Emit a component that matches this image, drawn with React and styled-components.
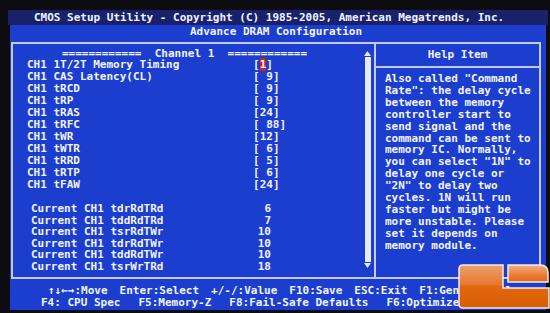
import React from 'react';
import styled, { createGlobalStyle } from 'styled-components';

const timings = [
  { label: 'CH1 1T/2T Memory Timing', value: '1', active: true },
  { label: 'CH1 CAS Latency(CL)', value: ' 9' },
  { label: 'CH1 tRCD', value: ' 9' },
  { label: 'CH1 tRP', value: ' 9' },
  { label: 'CH1 tRAS', value: '24' },
  { label: 'CH1 tRFC', value: ' 88' },
  { label: 'CH1 tWR', value: '12' },
  { label: 'CH1 tWTR', value: ' 6' },
  { label: 'CH1 tRRD', value: ' 5' },
  { label: 'CH1 tRTP', value: ' 6' },
  { label: 'CH1 tFAW', value: '24' },
];

const current = [
  ['Current CH1 tdrRdTRd', '6'],
  ['Current CH1 tddRdTRd', '7'],
  ['Current CH1 tsrRdTWr', '10'],
  ['Current CH1 tdrRdTWr', '10'],
  ['Current CH1 tddRdTWr', '10'],
  ['Current CH1 tsrWrTRd', '18'],
];

const helpLines = [
  'Also called "Command',
  'Rate": the delay cycle',
  'between the memory',
  'controller start to',
  'send signal and the',
  'command can be sent to',
  'memory IC. Normally,',
  'you can select "1N" to',
  'delay one cycle or',
  '"2N" to delay two',
  'cycles. 1N will run',
  'faster but might be',
  'more unstable. Please',
  'set it depends on',
  'memory module.',
];

const GlobalStyle = createGlobalStyle`
  html, body {
    margin: 0;
    padding: 0;
    background: #0d0d11;
  }
  body {
    width: 550px;
    height: 313px;
    overflow: hidden;
    font-family: "DejaVu Sans Mono", "Liberation Mono", monospace;
  }
`;

const Screen = styled.div`
  position: relative;
  width: 550px;
  height: 313px;
  box-sizing: border-box;
  padding: 10px 2px 0 8px;
  font-size: 11px;
  font-weight: bold;
  color: #f1f3ff;
`;

const TitleBar = styled.div`
  height: 15px;
  line-height: 15px;
  background: #19216b;
  padding-left: 26px;
  white-space: pre;
`;

const BlueArea = styled.div`
  margin: 0 2px;
  padding: 0 5px 1px 1px;
  background: #1c3ecf;
`;

const Subtitle = styled.div`
  height: 14px;
  line-height: 14px;
  text-align: center;
`;

const Frame = styled.div`
  margin-top: 3px;
  height: 237px;
  box-sizing: border-box;
  border: 2px solid #c3caf0;
  display: grid;
  grid-template-columns: 363px 163px;
`;

const LeftPanel = styled.div`
  display: flex;
  border-right: 2px solid #c3caf0;
`;

const Content = styled.div`
  flex: 1;
  padding: 4px 0 0 14px;
`;

const ChannelHeader = styled.div`
  line-height: 11px;
  padding-left: 35px;
  white-space: pre;
`;

const Row = styled.div`
  display: grid;
  grid-template-columns: 226px auto;
  line-height: 12px;
  white-space: pre;
`;

const Selected = styled.span`
  background: #d62020;
  color: #ffffff;
`;

const CurrentList = styled.div`
  margin-top: 12px;
`;

const CurrentRow = styled.div`
  display: grid;
  grid-template-columns: 200px 40px;
  padding-left: 4px;
  line-height: 11.6px;
  white-space: pre;

  span:last-child {
    text-align: right;
  }
`;

const ScrollTrack = styled.div`
  width: 7px;
  margin-right: 3px;
  padding: 7px 0 9px;
  display: flex;
  flex-direction: column;
  align-items: center;
`;

const ScrollBar = styled.div`
  flex: 1;
  width: 6px;
  margin: 1px 0;
  background: #e6eaff;
`;

const HelpPanel = styled.div`
  display: flex;
  flex-direction: column;
`;

const HelpHeader = styled.div`
  height: 22px;
  line-height: 22px;
  text-align: center;
  border-bottom: 2px solid #c3caf0;
`;

const HelpText = styled.div`
  padding: 5px 0 0 9px;
  line-height: 11.9px;

  div {
    white-space: pre;
  }
`;

const Footer = styled.div`
  padding-top: 6px;
  overflow: hidden;
`;

const FooterLine = styled.div`
  display: flex;
  gap: ${(p) => p.$gap}px;
  padding-left: ${(p) => p.$indent}px;
  line-height: 12px;
  white-space: pre;
`;

const Logo = styled.svg`
  position: absolute;
  left: 458px;
  top: 262px;
`;

const Arrow = ({ down }) => (
  <svg width="7" height="5" viewBox="0 0 7 5">
    <polygon points={down ? '0,0 7,0 3.5,5' : '3.5,0 7,5 0,5'} fill="#e6eaff" />
  </svg>
);

export default function App() {
  return (
    <>
      <GlobalStyle />
      <Screen>
        <TitleBar>CMOS Setup Utility - Copyright (C) 1985-2005, American Megatrends, Inc.</TitleBar>
        <BlueArea>
          <Subtitle>Advance DRAM Configuration</Subtitle>
          <Frame>
            <LeftPanel>
              <Content>
                <ChannelHeader>============  Channel 1  ============</ChannelHeader>
                {timings.map((t) => (
                  <Row key={t.label}>
                    <span>{t.label}</span>
                    <span>
                      [{t.active ? <Selected>{t.value}</Selected> : t.value}]
                    </span>
                  </Row>
                ))}
                <CurrentList>
                  {current.map(([label, value]) => (
                    <CurrentRow key={label}>
                      <span>{label}</span>
                      <span>{value}</span>
                    </CurrentRow>
                  ))}
                </CurrentList>
              </Content>
              <ScrollTrack>
                <Arrow />
                <ScrollBar />
                <Arrow down />
              </ScrollTrack>
            </LeftPanel>
            <HelpPanel>
              <HelpHeader>Help Item</HelpHeader>
              <HelpText>
                {helpLines.map((line) => (
                  <div key={line}>{line}</div>
                ))}
              </HelpText>
            </HelpPanel>
          </Frame>
          <Footer>
            <FooterLine $indent={37} $gap={12}>
              <span>↑↓←→:Move</span>
              <span>Enter:Select</span>
              <span>+/-/:Value</span>
              <span>F10:Save</span>
              <span>ESC:Exit</span>
              <span>F1:General Help</span>
            </FooterLine>
            <FooterLine $indent={30} $gap={18}>
              <span>F4: CPU Spec</span>
              <span>F5:Memory-Z</span>
              <span>F8:Fail-Safe Defaults</span>
              <span>F6:Optimized Defaults</span>
            </FooterLine>
          </Footer>
        </BlueArea>
        <Logo width="92" height="50" viewBox="0 0 92 50">
          <defs>
            <linearGradient id="lrTop" x1="0" y1="0" x2="0" y2="1">
              <stop offset="0" stopColor="#f2b088" />
              <stop offset="0.55" stopColor="#e8803a" />
              <stop offset="1" stopColor="#e0650f" />
            </linearGradient>
            <linearGradient id="lrBody" x1="0" y1="0" x2="0" y2="1">
              <stop offset="0" stopColor="#eda070" />
              <stop offset="0.45" stopColor="#e57a30" />
              <stop offset="0.5" stopColor="#e2670e" />
              <stop offset="1" stopColor="#d95c06" />
            </linearGradient>
          </defs>
          <path
            d="M1 7 Q1 3 5 3 H45 V26 H91 V46 H5 Q1 46 1 42 Z"
            fill="url(#lrBody)"
            stroke="#f4ece6"
            strokeWidth="1.5"
          />
          <path
            d="M50 3 H82 Q90 3 90 11 V20 H50 Z"
            fill="url(#lrTop)"
            stroke="#f4ece6"
            strokeWidth="1.5"
          />
        </Logo>
      </Screen>
    </>
  );
}
